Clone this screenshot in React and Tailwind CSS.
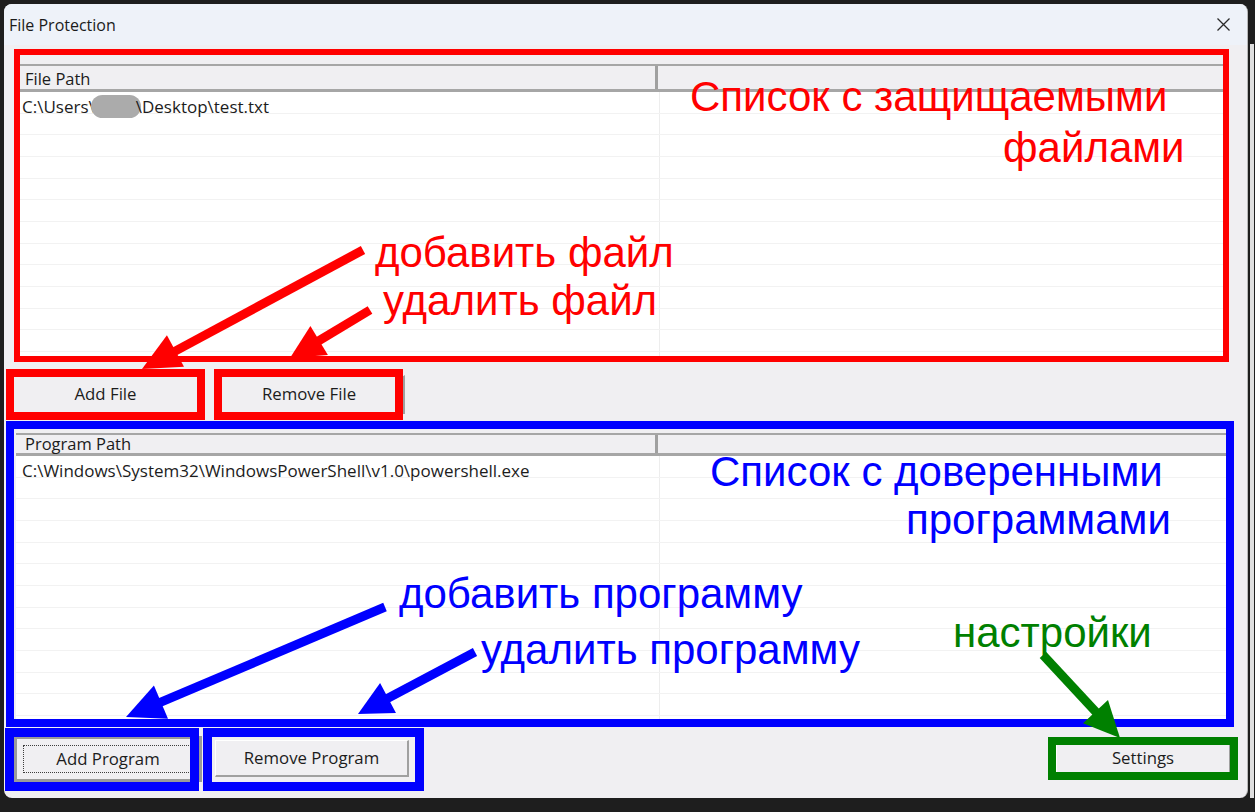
import React from "react";

function Arrow({ x1, y1, x2, y2, color, w = 9, hl = 38, hw = 18 }) {
  const dx = x2 - x1;
  const dy = y2 - y1;
  const len = Math.hypot(dx, dy);
  const ux = dx / len;
  const uy = dy / len;
  const bx = x2 - ux * hl;
  const by = y2 - uy * hl;
  const px = -uy;
  const py = ux;
  const pts = `${x2},${y2} ${bx + px * hw},${by + py * hw} ${bx - px * hw},${by - py * hw}`;
  return (
    <g>
      <line x1={x1} y1={y1} x2={bx + ux * 4} y2={by + uy * 4} stroke={color} strokeWidth={w} />
      <polygon points={pts} fill={color} />
    </g>
  );
}

function Rows({ count, col1, first }) {
  return (
    <div className="flex-1 bg-white overflow-hidden">
      {Array.from({ length: count }).map((_, i) => (
        <div key={i} className="flex h-[21.67px] border-b border-[#f2f2f2]">
          <div className={`${col1} h-full shrink-0 border-r border-[#ededed] flex items-center pl-[6px] pt-[8px] text-[17px] text-[#1c1c1c] whitespace-nowrap`}>
            {i === 0 ? first : null}
          </div>
          <div className="flex-1" />
        </div>
      ))}
    </div>
  );
}

function Header({ title, h, col1, pt }) {
  return (
    <div className={`flex ${h} shrink-0 border-t-2 border-b-[3px] border-[#a6a6a6] bg-[#f0eff2]`}>
      <div className={`${col1} ${pt} shrink-0 border-r-[3px] border-[#a0a0a0] flex items-center pl-[9px] text-[16.5px] text-[#1c1c1c]`}>
        {title}
      </div>
      <div className="flex-1" />
    </div>
  );
}

function Btn({ children, className }) {
  return (
    <div
      className={`flex items-center justify-center shrink-0 bg-[#f0eff2] border-t border-l border-t-white border-l-white border-r-2 border-b-2 border-r-[#a0a0a0] border-b-[#a0a0a0] text-[16.8px] text-[#1c1c1c] ${className}`}
    >
      {children}
    </div>
  );
}

export default function App() {
  const ann = "absolute leading-none whitespace-nowrap text-[42px] font-['Liberation_Sans',Arial,sans-serif]";
  return (
    <div className="relative w-[1255px] h-[812px] overflow-hidden bg-[#1e1e1e] font-['Open_Sans',sans-serif]">
      <div className="flex pt-[4px] pl-[4px]">
        <div className="w-[1244px] h-[794px] bg-[#f0eff2] rounded-[8px] overflow-hidden flex flex-col border-r border-[#b8b8b8]">
          {/* title bar */}
          <div className="h-[41px] shrink-0 bg-[#eef2f9] flex items-center justify-between pl-[5px] pr-[17px]">
            <span className="text-[16px] text-[#1b1b1b]">File Protection</span>
            <svg width="13" height="13" viewBox="0 0 13 13">
              <path d="M0.5 0.5 L12.5 12.5 M12.5 0.5 L0.5 12.5" stroke="#2a2a2a" strokeWidth="1.3" fill="none" />
            </svg>
          </div>

          {/* protected files list */}
          <div className="ml-[10px] mt-[4px] w-[1215px] h-[313px] shrink-0 pt-[15px] pl-[2px] flex flex-col outline-6 outline-solid outline-[#ff0000] outline-offset-[-6px]">
            <Header title="File Path" h="h-[28px]" col1="w-[642px]" pt="pt-[3px]" />
            <Rows
              count={13}
              col1="w-[644px]"
              first={
                <span className="flex items-center">
                  <span>C:\Users\</span>
                  <span className="inline-block w-[50px] h-[23px] rounded-full bg-[#ababab] -ml-[4px]" />
                  <span className="-ml-[5px]">\Desktop\test.txt</span>
                </span>
              }
            />
          </div>

          {/* file buttons */}
          <div className="flex items-start mt-[7px] h-[51px] shrink-0">
            <div className="ml-[2px] w-[199px] h-[51px] shrink-0 pl-[6px] pt-[6px] outline-8 outline-solid outline-[#ff0000] outline-offset-[-8px]">
              <Btn className="w-[188px] h-[39px]">Add File</Btn>
            </div>
            <div className="ml-[9px] w-[189px] h-[51px] shrink-0 pt-[6px] outline-8 outline-solid outline-[#ff0000] outline-offset-[-8px]">
              <Btn className="w-[191px] h-[39px]">Remove File</Btn>
            </div>
          </div>

          {/* trusted programs list */}
          <div className="ml-[2px] mt-[1px] w-[1228px] h-[306px] shrink-0 pt-[12px] pl-[10px] pr-[5px] flex flex-col outline-8 outline-solid outline-[#0000ff] outline-offset-[-8px]">
            <Header title="Program Path" h="h-[23px]" col1="w-[642px]" pt="pt-0" />
            <Rows
              count={13}
              col1="w-[644px]"
              first={<span>C:\Windows\System32\WindowsPowerShell\v1.0\powershell.exe</span>}
            />
          </div>

          {/* bottom buttons */}
          <div className="flex items-start mt-[1px] h-[63px] shrink-0">
            <div className="ml-[1px] w-[194px] h-[63px] shrink-0 pl-[9px] pt-[8px] outline-9 outline-solid outline-[#0000ff] outline-offset-[-9px]">
              <div className="w-[188px] h-[46px] bg-[#f0eff2] border-[3px] border-[#9a9a9a] p-[6px] text-[16.8px] text-[#1c1c1c]">
                <div className="w-full h-full border border-dotted border-[#3c3c3c] flex items-center justify-center">
                  Add Program
                </div>
              </div>
            </div>
            <div className="ml-[4px] w-[221px] h-[63px] shrink-0 pl-[12px] pt-[12px] outline-9 outline-solid outline-[#0000ff] outline-offset-[-9px]">
              <Btn className="w-[194px] h-[37px]">Remove Program</Btn>
            </div>
            <div className="ml-auto mr-[9px] mt-[9px] w-[190px] h-[43px] shrink-0 pl-[8px] pt-[3px] outline-8 outline-solid outline-[#008000] outline-offset-[-8px]">
              <Btn className="w-[175px] h-[37px]">Settings</Btn>
            </div>
          </div>
        </div>
        <div className="ml-[2px] mt-[40px] w-[4px] h-[754px] bg-[#dedede]" />
      </div>

      {/* arrows */}
      <svg className="absolute left-0 top-0 pointer-events-none" width="1255" height="812" viewBox="0 0 1255 812">
        <Arrow x1={363} y1={250} x2={142} y2={369} color="#ff0000" />
        <Arrow x1={370} y1={310} x2={290} y2={358} color="#ff0000" hl={34} hw={17} />
        <Arrow x1={385} y1={607} x2={126} y2={717} color="#0000ff" />
        <Arrow x1={475} y1={652} x2={358} y2={714} color="#0000ff" hl={34} hw={17} />
        <Arrow x1={1043} y1={655} x2={1120} y2={738} color="#008000" hl={36} hw={17} />
      </svg>

      {/* annotations */}
      <div className={`${ann} left-[690px] top-[76px] text-[#ff0000]`}>Список с защищаемыми</div>
      <div className={`${ann} left-[1003px] top-[127px] text-[#ff0000]`}>файлами</div>
      <div className={`${ann} left-[375px] top-[232px] text-[#ff0000]`}>добавить файл</div>
      <div className={`${ann} left-[383px] top-[280px] text-[#ff0000]`}>удалить файл</div>
      <div className={`${ann} left-[710px] top-[451px] text-[#0000ff]`}>Список с доверенными</div>
      <div className={`${ann} left-[906px] top-[499px] text-[#0000ff]`}>программами</div>
      <div className={`${ann} left-[399px] top-[573px] text-[#0000ff]`}>добавить программу</div>
      <div className={`${ann} left-[481px] top-[629px] text-[#0000ff]`}>удалить программу</div>
      <div className={`${ann} left-[953px] top-[612px] text-[#008000]`}>настройки</div>
    </div>
  );
}
